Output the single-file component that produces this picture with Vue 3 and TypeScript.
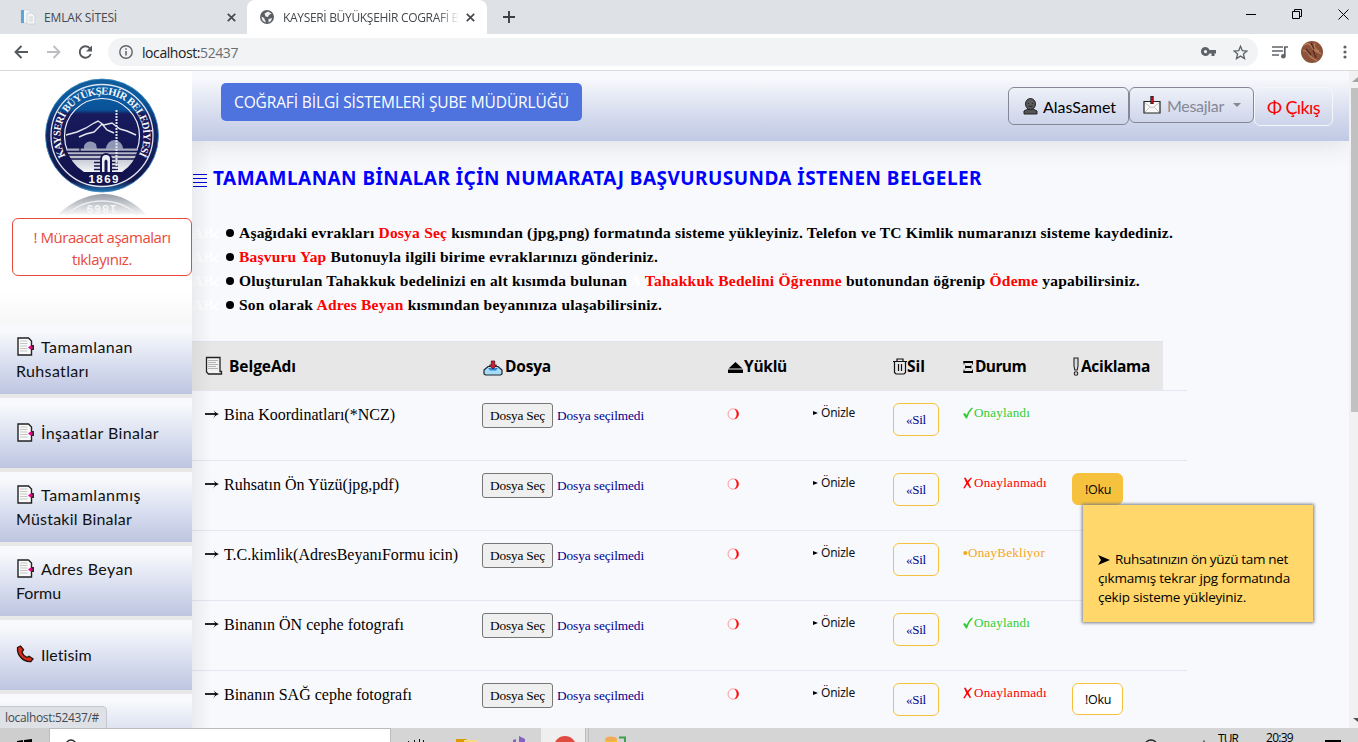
<script setup lang="ts">
interface MenuItem { lines: { text: string; width: number }[]; icon: 'doc' | 'phone' }
interface Row { name: string; width: number; status: 'ok' | 'no' | 'wait' | ''; note: '' | 'open' | 'closed' }

const menu: MenuItem[] = [
  { icon: 'doc', lines: [{ text: 'Tamamlanan', width: 92 }, { text: 'Ruhsatları', width: 73 }] },
  { icon: 'doc', lines: [{ text: 'İnşaatlar Binalar', width: 118 }] },
  { icon: 'doc', lines: [{ text: 'Tamamlanmış', width: 100 }, { text: 'Müstakil Binalar', width: 116 }] },
  { icon: 'doc', lines: [{ text: 'Adres Beyan', width: 92 }, { text: 'Formu', width: 45 }] },
  { icon: 'phone', lines: [{ text: 'Iletisim', width: 51 }] },
]

const rows: Row[] = [
  { name: 'Bina Koordinatları(*NCZ)', width: 171, status: 'ok', note: '' },
  { name: 'Ruhsatın Ön Yüzü(jpg,pdf)', width: 175, status: 'no', note: 'open' },
  { name: 'T.C.kimlik(AdresBeyanıFormu icin)', width: 234, status: 'wait', note: '' },
  { name: 'Binanın ÖN cephe fotografı', width: 180, status: 'ok', note: '' },
  { name: 'Binanın SAĞ cephe fotografı', width: 188, status: 'no', note: 'closed' },
]

const statusText = { ok: 'Onaylandı', no: 'Onaylanmadı', wait: 'OnayBekliyor', '': '' }
const statusWidth = { ok: 56, no: 73, wait: 77, '': 0 }

// Tracks text out or in so that it fills the given width.
const vFit = {
  mounted(el: HTMLElement, binding: { value: number }) {
    const natural = el.getBoundingClientRect().width
    const count = (el.textContent ?? '').trim().length
    if (count > 1) el.style.letterSpacing = `${(binding.value - natural) / count}px`
  },
}
</script>

<template>
  <div class="screen">
    <div class="tabs">
      <div class="tab first">
        <svg width="16" height="16" viewBox="0 0 16 16"><path d="M1 1h9v13H1z" fill="#f5f8fa" stroke="#d4d9dd" /><path d="M1 1h3v13H1z" fill="#5aa7dc" /><path d="M7 4h5l3 3v8H7z" fill="#f4f6f7" stroke="#d0d5d9" /><path d="M9 8h4M9 10h4M9 12h4" stroke="#d0d4d8" /></svg>
        <span v-fit="73" class="tt">EMLAK SİTESİ</span>
        <svg class="x" width="9" height="9" viewBox="0 0 9 9"><path d="M.8.8l7.400 7.400M8.200.8L.8 8.200" stroke="#45494d" stroke-width="1.7" /></svg>
      </div>
      <div class="tab active">
        <svg width="14" height="14" viewBox="0 0 14 14"><circle cx="7" cy="7" r="7" fill="#5b5f64" /><path d="M1.500 6.500L4 8l1 2 1 2.500C3.500 12 1.500 10 1.500 6.500zM4.500 3.500L8 1.500l3.500 2L9 5 8 7 5.500 6.500zM8.500 9l3.500-1-1 3-2.500 1.500z" fill="#fff" opacity=".9" /></svg>
        <span class="tt clip"><span v-fit="185">KAYSERİ BÜYÜKŞEHİR COGRAFİ BİL</span></span>
        <svg class="x" width="9" height="9" viewBox="0 0 9 9"><path d="M.8.8l7.400 7.400M8.200.8L.8 8.200" stroke="#45494d" stroke-width="1.7" /></svg>
      </div>
      <svg class="plus" width="12" height="12" viewBox="0 0 12 12"><path d="M6 0v12M0 6h12" stroke="#3c4043" stroke-width="1.900" /></svg>
      <svg class="win" width="104" height="14" viewBox="0 0 104 14"><path d="M0 7.500h10M46.500 4.500h7v7h-7zM48.500 4v-1.500h7v7H54M92.500 2.500l10 10M102.500 2.500l-10 10" fill="none" stroke="#000" /></svg>
    </div>

    <div class="toolbar">
      <svg class="nav" width="80" height="16" viewBox="0 0 80 16" fill="none" stroke-width="1.900"><path d="M14 8H1.500M7.500 2L1.500 8l6 6" stroke="#55595d" /><path d="M33 8h12.500M39.500 2l6 6-6 6" stroke="#bcbec1" /><path d="M76 4.500a5.700 5.700 0 1 0 .8 5.500" stroke="#55595d" /><path d="M78 1.500v6h-6z" fill="#55595d" /></svg>
      <div class="omni">
        <svg width="14" height="14" viewBox="0 0 14 14"><circle cx="7" cy="7" r="6.200" fill="none" stroke="#5f6368" stroke-width="1.400" /><path d="M7 6v4.500M7 3.200v1.600" stroke="#5f6368" stroke-width="1.500" /></svg>
        <span v-fit="96" class="url"><b>localhost:</b>52437</span>
        <svg class="key" width="15" height="10" viewBox="0 0 15 10"><path fill-rule="evenodd" d="M4.500 0a4.500 4.500 0 0 1 4 3H15v3.500h-1.500V9H10.500V6.500h-2A4.500 4.500 0 1 1 4.500 0zm0 3a1.600 1.600 0 1 0 0 3.200 1.600 1.600 0 0 0 0-3.200z" fill="#5f6368" /></svg>
        <svg class="star" width="15" height="15" viewBox="0 0 15 15"><path d="M7.500 1.300l1.800 4.300 4.600.4-3.500 3 1.100 4.600-4-2.500-4 2.500L4.600 9 1.100 6l4.600-.4z" fill="none" stroke="#5f6368" stroke-width="1.300" /></svg>
      </div>
      <svg class="media" width="16" height="13" viewBox="0 0 16 13"><path d="M0 1h11M0 5h11M0 9h7" stroke="#5f6368" stroke-width="1.500" /><path d="M12.800 10V1H16" fill="none" stroke="#5f6368" stroke-width="1.700" /><circle cx="11.300" cy="10.300" r="2.300" fill="#5f6368" /></svg>
      <svg class="avatar" width="22" height="22" viewBox="0 0 22 22"><circle cx="11" cy="11" r="11" fill="#8b5139" /><path d="M3 4c5-3 7 0 9 4s6 2 8 5M2 10c3-2 5 2 7 5s5 3 7 5M14 2c-2 4 1 8 4 8" fill="none" stroke="#b87a5d" stroke-width="1.500" /><path d="M5 8l5 6M12 9l3 8M10 2l3 6" stroke="#51271f" stroke-width="1.200" /></svg>
      <svg class="dots" width="4" height="14" viewBox="0 0 4 14" fill="#5f6368"><circle cx="2" cy="2" r="1.600" /><circle cx="2" cy="7" r="1.600" /><circle cx="2" cy="12" r="1.600" /></svg>
    </div>

    <div class="page">
      <aside class="side">
        <svg class="logo" width="192" height="145" viewBox="0 0 192 145">
          <defs>
            <linearGradient id="rim" x1="0" y1="0" x2="0" y2="1"><stop offset="0" stop-color="#0f5c9b" /><stop offset=".18" stop-color="#0a5a9f" /><stop offset=".4" stop-color="#13296a" /><stop offset=".9" stop-color="#141548" /><stop offset="1" stop-color="#2378b8" /></linearGradient>
            <linearGradient id="disc" x1="0" y1="0" x2="0" y2="1"><stop offset="0" stop-color="#0b62aa" /><stop offset=".25" stop-color="#0a5197" /><stop offset=".29" stop-color="#171a5c" /><stop offset="1" stop-color="#11124b" /></linearGradient>
            <linearGradient id="silver" x1="0" y1="0" x2="0" y2="1"><stop offset="0" stop-color="#a4a8b9" /><stop offset="1" stop-color="#f4f5f8" /></linearGradient>
            <linearGradient id="fade" x1="0" y1="0" x2="0" y2="1"><stop offset="0" stop-color="#989da7" /><stop offset="1" stop-color="#f4f5f6" /></linearGradient>
            <path id="ring" d="M65.700 85.100A41.500 41.500 0 1 1 138.200 85.100" />
          </defs>
          <path d="M58 143.500C70 132 85 124 102 123s34 9 44 20.500z" fill="url(#fade)" />
          <path d="M66 144c10-9 22-14 36-14s26 5 36 14" fill="none" stroke="#eceef1" stroke-width="1.300" />
          <text transform="translate(101.500 134) rotate(180)" text-anchor="middle" class="year ghost" textLength="30">1869</text>
          <circle cx="102" cy="64.500" r="56.500" fill="url(#rim)" stroke="#3d8cc0" stroke-width=".8" />
          <circle cx="102" cy="64.500" r="51" fill="url(#disc)" stroke="#dfe4ef" stroke-width="1.300" />
          <path d="M76 92A37.500 37.500 0 1 1 128 92" fill="none" stroke="#eef1f7" stroke-width="1.200" />
          <text class="ringtext"><textPath href="#ring" textLength="171">KAYSERİ BÜYÜKŞEHİR BELEDİYESİ</textPath></text>
          <path d="M66 64l11-3 9-4 8-5 4-2 6 4 8-2 8 6 7 2 9 4M79 66l7-3 8-2 8-8 5 6 7 3" fill="none" stroke="#e3e6ee" stroke-width="1.400" />
          <path d="M84 78v-3a7 7 0 0 1 12-2l1 5zM106 78a8.500 9 0 0 1 17 0z" fill="#8f95b4" />
          <path d="M67 77.500h71A37 37 0 0 1 122 101H84A37 37 0 0 1 67 77.500z" fill="url(#silver)" />
          <path d="M80 76v4M67 80.500h72M67 84h72M69 88h66M94 91.500h24M94 95h24M94 98.500h24" stroke="#15164f" stroke-width="1.300" />
          <path d="M116.500 39v62" stroke="#e2e5ec" stroke-width="2" stroke-dasharray="2 1" />
          <path d="M100 101V88a6 6 0 0 1 12 0v13z" fill="#15164f" /><path d="M102 101V88a4 4 0 0 1 8 0v13h-2.500V90q-1.500-3-3 0v11z" fill="#eef0f5" />
          <text x="103.500" y="112" text-anchor="middle" class="year" textLength="30">1869</text>
        </svg>
        <a class="notice"><span v-fit="137">! Müraacat aşamaları</span><br /><span v-fit="60">tıklayınız.</span></a>
        <div class="glow"></div>
        <nav class="menu">
          <div v-for="(m, i) in menu" :key="i" class="item">
            <div v-for="(l, j) in m.lines" :key="j" class="line">
              <svg v-if="j === 0 && m.icon === 'doc'" width="18" height="19" viewBox="0 0 18 19"><path d="M2 1h10.500l3 3v14H2z" fill="#fafafa" stroke="#222" stroke-width="1.400" /><path d="M4 4h7.500M4 6.500h7.500M4 9h7.500M4 11.500h7.500M4 14h7.500" stroke="#c5c5c5" /><path d="M15 8h3v5h-3z" fill="#40202e" /><path d="M12 10.500l2.500-2 2.500 2-2.500 2z" fill="#ec008c" /></svg>
              <svg v-if="m.icon === 'phone'" width="18" height="18" viewBox="0 0 18 18"><path d="M1.500 2.500L4.500 1l3 3.500L6 7.500c1 2.500 2.500 4 5 5l2-1.300 4 2.600-2 2.700C8 17.500.8 11 1.500 2.500z" fill="#d82c18" stroke="#25100c" stroke-width="1.300" /></svg>
              <span v-fit="l.width">{{ l.text }}</span>
            </div>
          </div>
          <div class="item"></div>
        </nav>
      </aside>

      <main class="main">
        <header class="top">
          <div class="brand"><span v-fit="335">COĞRAFİ BİLGİ SİSTEMLERİ ŞUBE MÜDÜRLÜĞÜ</span></div>
          <div class="user">
            <svg width="15" height="17" viewBox="0 0 15 17"><path d="M1 16v-3l4-2h5l4 2v3z" fill="#555" stroke="#222" /><ellipse cx="7.500" cy="6" rx="5" ry="5.500" fill="#5a5a5a" stroke="#222" /><path d="M5.500 5v1M9.500 5v1M5.500 8q2 1 4 0" stroke="#222" fill="none" /></svg>
            <span v-fit="73">AlasSamet</span>
          </div>
          <div class="mail">
            <svg width="18" height="18" viewBox="0 0 18 18"><path d="M1 5.500h16v11.500H1z" fill="#f8f8f8" stroke="#222" stroke-width="1.200" /><path d="M2 7l7 5 7-5M2 16l5-5M16 16l-5-5" stroke="#c4c4c4" fill="none" /><path d="M9 0v8" stroke="#222" stroke-width="3.400" /><path d="M9 1V7.500" stroke="#e3001b" stroke-width="1.600" /></svg>
            <span v-fit="57">Mesajlar</span>
            <i class="caret"></i>
          </div>
          <div class="exit"><span v-fit="53">Φ Çıkış</span></div>
        </header>

        <h1 class="title">
          <svg width="14" height="14" viewBox="0 0 14 14"><path d="M0 1.500h14M0 5.500h14M0 9.500h14M0 13.500h14" stroke="#0000d0" /></svg>
          <span v-fit="769">TAMAMLANAN BİNALAR İÇİN NUMARATAJ BAŞVURUSUNDA İSTENEN BELGELER</span>
        </h1>

        <div class="steps">
          <p><i>ABc</i><b></b><span v-fit="934">Aşağıdaki evrakları <em>Dosya Seç</em> kısmından (jpg,png) formatında sisteme yükleyiniz. Telefon ve TC Kimlik numaranızı sisteme kaydediniz.</span></p>
          <p><i>ABc</i><b></b><span v-fit="419"><em>Başvuru Yap</em> Butonuyla ilgili birime evraklarınızı gönderiniz.</span></p>
          <p><i>ABc</i><b></b><span v-fit="901">Oluşturulan Tahakkuk bedelinizi en alt kısımda bulunan <u>A</u> <em>Tahakkuk Bedelini Öğrenme</em> butonundan öğrenip <em>Ödeme</em> yapabilirsiniz.</span></p>
          <p><i>ABc</i><b></b><span v-fit="423">Son olarak <em>Adres Beyan</em> kısmından beyanınıza ulaşabilirsiniz.</span></p>
        </div>

        <section class="table">
          <div class="grid head">
            <div><svg class="scroll" width="18" height="20" viewBox="0 0 18 20"><path d="M1.500 1.500h13.500v14h1.500v2.500H3.500L1.500 16z" fill="#f3f3f3" stroke="#222" stroke-width="1.300" /><path d="M3 4.500h10M3 6.500h8M3 8.500h10M3 10.500h8M3 12.500h10" stroke="#b5b5b5" /></svg><span v-fit="67">BelgeAdı</span></div>
            <div><svg class="tray" width="20" height="16" viewBox="0 0 20 16"><path d="M1 10l4-3.500h10l4 3.500v4l-1.500 1h-15L1 14z" fill="#a8dcf5" stroke="#1c2730" stroke-width="1.200" /><path d="M5 8h10l-2 2.500H7z" fill="#2d83d8" /><path d="M8.300 1h3.400v4h2L10 9 6.300 5h2z" fill="#cf1f35" stroke="#461019" stroke-width=".8" /></svg><span v-fit="46">Dosya</span></div>
            <div><svg class="eject" width="15" height="12" viewBox="0 0 15 12"><path d="M7.500 0L14.500 6.500H.5zM0 7.500h15V11H0z" fill="#000" /></svg><span v-fit="43">Yüklü</span></div>
            <div><svg class="trash" width="14" height="17" viewBox="0 0 14 17"><path d="M0 3.500h14M4 3V1h6v2M1.500 4v10.500L3 16h8l1.500-1.500V4M5.500 6v7M8.500 6v7" fill="none" stroke="#111" stroke-width="1.200" /></svg><span v-fit="18">Sil</span></div>
            <div><svg class="xi" width="11" height="12" viewBox="0 0 11 12"><path d="M.5 1h9.500M2.500 6h5.500M.5 11h9.500" stroke="#000" stroke-width="2" /><path d="M1 0v3.500M9.500 0v3.500M2.500 4.500v3M8 4.500v3M1 8.500V12M9.500 8.500V12" stroke="#000" stroke-width=".8" /></svg><span v-fit="51">Durum</span></div>
            <div><svg class="bang" width="9" height="19" viewBox="0 0 9 19"><path d="M2 1h4v8l-.8 4H2.800L2 9z" fill="#ddd" stroke="#222" stroke-width="1.100" /><circle cx="4" cy="16.500" r="1.800" fill="#ddd" stroke="#222" stroke-width="1.100" /></svg><span v-fit="69">Aciklama</span></div>
          </div>

          <div v-for="r in rows" :key="r.name" class="grid row">
            <div class="name"><svg width="14" height="10" viewBox="0 0 14 10"><path d="M0 5h12" stroke="#000" stroke-width="1.700" /><path d="M8 0Q9.500 3.500 14 5 9.500 6.500 8 10L10.500 5z" fill="#000" /></svg><span v-fit="r.width">{{ r.name }}</span></div>
            <div class="file"><button><span v-fit="55">Dosya Seç</span></button><span v-fit="87">Dosya seçilmedi</span></div>
            <div class="loaded">
              <svg width="13" height="12" viewBox="0 0 13 12"><circle cx="6.200" cy="6" r="5.200" fill="none" stroke="#ff9a9a" /><path d="M8 1.100A5.200 5.200 0 0 1 8 10.900Q12 6 8 1.100z" fill="#f00" stroke="#f22" stroke-width=".6" /></svg>
              <span class="preview"><svg width="5" height="6" viewBox="0 0 5 6"><path d="M0 1l5 2-5 2z" fill="#000" /></svg><span v-fit="34">Önizle</span></span>
            </div>
            <div><button class="del"><span v-fit="20">«Sil</span></button></div>
            <div class="status" :class="r.status">
              <svg v-if="r.status === 'ok'" width="11" height="12" viewBox="0 0 11 12"><path d="M0 7l2-1 1.500 2Q6 2 9.500.5L10 1Q6 5 4 11.500H3z" fill="currentColor" /></svg>
              <svg v-if="r.status === 'no'" width="11" height="12" viewBox="0 0 11 12"><path d="M1 1l1.500-.5L4.500 4 8 .5l1 .5-3.500 4.500L8 10.500l-1 .8-2.800-4L1.500 11.500.3 11l3-5z" fill="currentColor" /></svg>
              <svg v-if="r.status === 'wait'" width="5" height="12" viewBox="0 0 5 12"><circle cx="2.300" cy="6" r="2.100" fill="currentColor" /></svg>
              <span v-fit="statusWidth[r.status]">{{ statusText[r.status] }}</span>
            </div>
            <div><button v-if="r.note" class="oku" :class="r.note"><span v-fit="26">!Oku</span></button></div>
          </div>
        </section>
      </main>

      <div class="bar"><i class="up"></i><div class="thumb"></div><i class="down"></i></div>

      <div class="tip">
        <p><svg width="12" height="10" viewBox="0 0 12 10"><path d="M0 0l12 5-12 5 3-5z" /></svg><span v-fit="173">Ruhsatınızın ön yüzü tam net</span></p>
        <p><span v-fit="192">çıkmamış tekrar jpg formatında</span></p>
        <p><span v-fit="148">çekip sisteme yükleyiniz.</span></p>
      </div>
      <div class="hover-url"><span v-fit="94">localhost:52437/#</span></div>
    </div>

    <div class="taskbar">
      <div class="start"><svg width="48" height="14" viewBox="0 0 48 14"><path d="M17 13l6-1v2h-6zM24 12l8-1v3h-8z" fill="#000" /></svg></div>
      <div class="search"><svg width="30" height="13" viewBox="0 0 30 13"><circle cx="21" cy="16" r="5" fill="none" stroke="#222" stroke-width="1.300" /></svg></div>
      <div class="apps">
        <svg width="290" height="14" viewBox="391 728 290 14"><path d="M541 728h44v14h-44z" fill="#efefef" /><path d="M585.500 728v14M588.500 728v14" stroke="#bdbdbd" /><path d="M408.500 741v1M414.500 740v2M419.500 739v3M423.500 740v2" stroke="#111" /><path d="M456 739h10l1 1v2h-11z" fill="#dc9b00" /><path d="M464 740h14v2h-14z" fill="#f8dc83" /><path d="M513 742v-2l3-1v3zM519 736l6 3v3h-6z" fill="#8661c5" /><circle cx="565" cy="747" r="11" fill="#df4b3f" /><path d="M605 740h12v2h-12z" fill="#fbc31d" /><ellipse cx="611" cy="739" rx="6" ry="2.500" fill="#f1ac58" /><path d="M619 737.500h6v5" fill="none" stroke="#40a04b" stroke-width="2" /></svg>
      </div>
      <svg class="sys" width="60" height="14" viewBox="1145 728 60 14"><path d="M1146 742q5-4 10 0M1204 742v-1.500" fill="none" stroke="#222" stroke-width="1.300" /></svg>
      <span class="lang"><span v-fit="20">TUR</span></span>
      <span class="clock"><span v-fit="27">20:39</span></span>
      <i class="note"></i>
    </div>
  </div>
</template>

<style>
html, body { margin: 0; overflow: hidden; }
</style>

<style scoped>
* { box-sizing: border-box; }
svg { display: block; flex: none; }
p, h1 { margin: 0; }
span { white-space: nowrap; }
button { display: flex; align-items: center; margin: 0; white-space: nowrap; }
.screen { width: 1358px; height: 742px; display: flex; flex-direction: column; overflow: hidden; background: #f8f9fc; font-family: "Open Sans", "Noto Sans", sans-serif; color: #000; }

.tabs { height: 34px; flex: none; display: flex; background: #dee1e6; }
.tab { height: 34px; display: flex; align-items: center; font-size: 12px; color: #45494d; }
.first { width: 247px; padding-left: 20px; }
.first .tt { margin-left: 8px; }
.tab .x { margin-left: auto; }
.first .x { margin-right: 11px; }
.active { width: 240px; padding: 0 12px 0 13px; background: #fff; border-radius: 8px 8px 0 0; }
.clip { width: 176px; margin-left: 9px; overflow: hidden; mask-image: linear-gradient(90deg, #000 88%, transparent); }
.plus { margin: 11px 0 0 16px; }
.win { margin: 7px 0 0 auto; margin-right: 8px; }

.toolbar { height: 37px; flex: none; display: flex; align-items: center; background: #fff; border-bottom: 1px solid #d8dade; }
.nav { margin-left: 14px; }
.omni { width: 1150px; height: 28px; margin-left: 14px; padding-left: 11px; display: flex; align-items: center; background: #f1f3f4; border-radius: 14px; }
.url { margin-left: 9px; font-size: 14px; color: #6a6e73; }
.url b { font-weight: 400; color: #202124; }
.key { margin-left: auto; }
.star { margin: 0 10px 0 17px; }
.media { margin-left: 14px; }
.avatar { margin-left: 13px; }
.dots { margin-left: 20px; }

.page { position: relative; height: 657px; flex: none; display: flex; overflow: hidden; }
.side { width: 192px; flex: none; background: #fff; }
.logo { height: 145px; }
.ringtext { font: bold 10.500px "Liberation Serif", serif; fill: #f4f6fa; }
.year { font: bold 11.500px "Liberation Sans", sans-serif; fill: #fff; }
.ghost { fill: #f6f6f8; }
.notice { display: block; width: 180px; height: 58px; margin: 2px 0 0 12px; padding-top: 7px; border: 1px solid #e74a3b; border-radius: 6px; text-align: center; color: #e74a3b; font-size: 15px; line-height: 22px; }
.glow { height: 48px; background: linear-gradient(#fff 30%, #f7f7f7); }
.menu { display: flex; flex-direction: column; gap: 4px; background: #e8e8e8; }
.item { height: 70px; flex: none; padding: 0 0 2px 16px; display: flex; flex-direction: column; justify-content: center; background: linear-gradient(#f8f9fc 10%, #d8deef 58%, #bdc5e1); font-family: Lato, sans-serif; font-size: 16px; color: #111; }
.line { height: 24px; display: flex; align-items: center; }
.line svg { margin-right: 7px; }

.main { position: relative; width: 1157px; flex: none; background: #f8f9fc; overflow: hidden; }
.main::after { content: ""; position: absolute; left: 0; top: 70px; bottom: 0; width: 20px; background: linear-gradient(90deg, rgba(58, 59, 69, .07), transparent); }
.top { height: 70px; padding-left: 29px; display: flex; align-items: flex-start; background: linear-gradient(#f8f9fc 10%, #d8deef 58%, #c0c9e5); box-shadow: 0 2px 28px rgba(58, 59, 69, .15); }
.brand { width: 361px; height: 38px; margin-top: 12px; padding-left: 13px; background: #4e73df; border-radius: 5px; color: #fff; font-size: 15.500px; line-height: 38px; }
.user, .mail, .exit { display: flex; align-items: center; border: 1px solid #858796; border-radius: 6px; font-family: Lato, sans-serif; font-size: 16px; }
.user { width: 121px; height: 38px; margin: 16px 0 0 426px; padding-left: 14px; }
.user svg { margin-right: 5px; }
.mail { width: 125px; height: 36px; margin-top: 16px; padding-left: 13px; color: #858796; }
.mail svg { margin-right: 6px; }
.caret { margin-left: 9px; border: 4.500px solid transparent; border-top-color: #858796; border-bottom: 0; }
.exit { width: 79px; height: 39px; margin-top: 16px; padding-left: 12px; border-color: #f5f6fb; color: #f00; font-size: 18px; }

.title { height: 30px; margin-top: 22px; padding-left: 1px; display: flex; align-items: center; font: bold 19px/30px "Noto Sans", sans-serif; color: #00f; }
.title svg { margin: 4px 6px 0 0; }
.steps { margin-top: 28px; font: bold 15.500px/24px "Liberation Serif", serif; }
.steps p { height: 24px; display: flex; align-items: center; }
.steps i { width: 34px; color: #fff; font-style: normal; }
.steps b { width: 8px; height: 8px; margin-right: 5px; border-radius: 4px; background: #000; }
.steps em { color: #f00; font-style: normal; }
.steps u { color: #fff; text-decoration: none; }

.table { width: 995px; margin-top: 24px; }
.grid { display: grid; grid-template-columns: 277px 245px 166px 70px 109px 128px; }
.grid > div { display: flex; align-items: flex-start; padding-left: 13px; min-width: 0; }
.head { width: 971px; height: 49px; background: #e7e7e7; border-top: 1px solid #e1e4ef; font: bold 15.500px/20px "Open Sans", sans-serif; overflow: hidden; }
.head > div { padding-top: 14px; }
.scroll { margin: 0 6px 0 0; }
.tray { margin: 4px 2px 0 1px; }
.eject { margin: 6px 1px 0 1px; }
.trash { margin-top: 2px; }
.xi { margin-top: 5px; margin-right: 1px; }
.bang { margin-top: 1px; }
.row { height: 70px; border-top: 1px solid #e3e6f0; font: 13.333px/16px "Liberation Serif", serif; }
.row > div { padding-top: 12px; }
.name { font-size: 16px; line-height: 24px; }
.name svg { margin: 6px 5px 0 0; }
.file { color: #00008b; line-height: 26px; }
.file button { width: 71px; height: 25px; margin-right: 4px; padding: 0 0 0 7px; background: #efefef; border: 1px solid #767676; border-radius: 3px; font: inherit; color: #000; }
.loaded > svg { margin-top: 5px; }
.preview { display: flex; align-items: center; margin: 2px 0 0 73px; font: 12px/16px "Noto Sans", sans-serif; color: #111; }
.preview svg { margin-right: 3px; }
.del, .oku { border: 1px solid #f6c23e; border-radius: 6px; background: transparent; }
.del { width: 46px; height: 33px; padding: 0 0 0 12px; color: #00008b; font: 13px "Liberation Serif", serif; }
.oku { width: 51px; height: 32px; padding: 0 0 0 12px; color: #000; font: 12.500px "Open Sans", sans-serif; }
.oku.open { background: #f6c23e; }
.oku.closed { background: #fff; }
.row .status { padding-top: 14px; font-size: 13px; }
.status svg { margin-top: 2px; }
.ok { color: #32cd32; }
.no { color: #f00; }
.wait { color: #f5a623; }

.bar { width: 9px; flex: none; display: flex; flex-direction: column; background: #f1f1f1; }
.bar .up { width: 6px; height: 5px; margin: 6px 0 6px 3px; flex: none; background: #a3a3a3; clip-path: polygon(100% 0, 100% 100%, 0 100%); }
.thumb { height: 324px; margin-left: 2px; background: #c1c1c1; }
.bar .down { width: 5px; height: 4px; margin: auto 0 6px 4px; background: #505050; clip-path: polygon(0 0, 100% 0, 100% 100%); }

.tip { position: absolute; left: 1083px; top: 434px; width: 230px; height: 117px; padding: 45px 0 0 15px; background: #ffd76a; box-shadow: 0 0 3px 1px #777d88; font: 13.500px/19px "Open Sans", sans-serif; }
.tip p { height: 19px; display: flex; align-items: center; }
.tip svg { margin-right: 5px; }
.hover-url { position: absolute; left: 0; bottom: 0; width: 107px; height: 22px; padding-left: 5px; background: #dee1e6; border: 1px solid #c5c8ce; border-left: 0; border-bottom: 0; border-radius: 0 5px 0 0; color: #45494d; font-size: 12px; line-height: 22px; }

.taskbar { height: 14px; flex: none; display: flex; overflow: hidden; background: #d5d5d5; font-size: 12px; }
.start { width: 49px; background: #cecece; }
.search { width: 342px; background: #fff; border: 1px solid #bcbcbc; border-bottom: 0; overflow: hidden; }
.apps { width: 290px; }
.sys { margin-left: 464px; }
.lang { width: 20px; margin: 2px 0 0 13px; line-height: 18px; }
.clock { width: 27px; margin: 1px 0 0 28px; line-height: 18px; }
.note { width: 16px; height: 2px; margin: 12px 0 0 32px; background: #000; }
</style>
